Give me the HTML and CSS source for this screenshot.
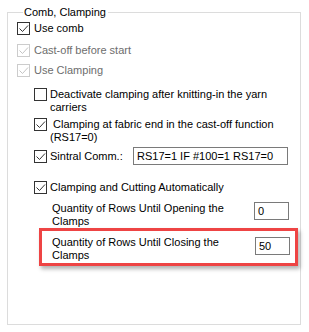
FILE: index.html
```html
<!DOCTYPE html>
<html>
<head>
  <meta charset="utf-8" />
  <title>Comb, Clamping</title>
  <link rel="stylesheet" href="styles.css">
</head>
<body>
  <fieldset class="group">
    <legend>Comb, Clamping</legend>

    <label class="check">
      <span class="box"><svg viewBox="0 0 11 11"><path d="M1.5 5.5 L4.5 8.5 L10 2.5" /></svg></span>
      <span>Use comb</span>
    </label>
    <label class="check off row2">
      <span class="box"><svg viewBox="0 0 11 11"><path d="M1.5 5.5 L4.5 8.5 L10 2.5" /></svg></span>
      <span>Cast-off before start</span>
    </label>
    <label class="check off row3">
      <span class="box"><svg viewBox="0 0 11 11"><path d="M1.5 5.5 L4.5 8.5 L10 2.5" /></svg></span>
      <span>Use Clamping</span>
    </label>

    <div class="sub">
      <label class="check top">
        <span class="box"></span>
        <span>Deactivate clamping after knitting-in the yarn<br />carriers</span>
      </label>
      <label class="check top fabric">
        <span class="box"><svg viewBox="0 0 11 11"><path d="M1.5 5.5 L4.5 8.5 L10 2.5" /></svg></span>
        <span>&nbsp;Clamping at fabric end in the cast-off function<br />(RS17=0)</span>
      </label>
      <div class="sintral">
        <label class="check">
          <span class="box"><svg viewBox="0 0 11 11"><path d="M1.5 5.5 L4.5 8.5 L10 2.5" /></svg></span>
          <span>Sintral Comm.:</span>
        </label>
        <div class="field wide">RS17=1 IF #100=1 RS17=0</div>
      </div>
      <label class="check cutting">
        <span class="box"><svg viewBox="0 0 11 11"><path d="M1.5 5.5 L4.5 8.5 L10 2.5" /></svg></span>
        <span>Clamping and Cutting Automatically</span>
      </label>

      <div class="qty">
        <span>Quantity of Rows Until Opening the<br />Clamps</span>
        <div class="field">0</div>
      </div>
      <div class="qty mark">
        <span>Quantity of Rows Until Closing the<br />Clamps</span>
        <div class="field">50</div>
      </div>
    </div>
  </fieldset>
</body>
</html>
```

FILE: styles.css
```css
body {
  margin: 0;
  background: #ffffff;
  font-family: "Liberation Sans", Arial, sans-serif;
  font-size: 11px;
  line-height: 13px;
  color: #000000;
}
.group {
  margin: 6px 0 0 7px;
  width: 294px;
  height: 319px;
  box-sizing: border-box;
  border: 1px solid #dcdcdc;
  padding: 3px 2px 0 9px;
}
.group legend {
  margin-left: 6px;
  padding: 0 2px 0 1px;
}
.check {
  display: flex;
  align-items: center;
  gap: 4px;
  height: 13px;
}
.check.top {
  align-items: flex-start;
  height: auto;
  gap: 3px;
}
.row2 {
  margin-top: 9px;
}
.row3 {
  margin-top: 7px;
}
.box {
  width: 13px;
  height: 13px;
  box-sizing: border-box;
  border: 1px solid #333333;
  background: #ffffff;
  flex: none;
}
.box svg {
  display: block;
  width: 11px;
  height: 11px;
}
.box path {
  fill: none;
  stroke: #333333;
  stroke-width: 1;
}
.off {
  color: #6d6d6d;
}
.off .box {
  border-color: #cccccc;
}
.off .box path {
  stroke: #c4c4c4;
}
.sub {
  margin-left: 17px;
  display: flex;
  flex-direction: column;
}
.sub .check.top:first-child {
  margin-top: 11px;
}
.fabric {
  margin-top: 4px;
}
.sintral {
  display: flex;
  align-items: center;
  margin-top: 3px;
  height: 18px;
}
.sintral .check {
  width: 99px;
  gap: 3px;
}
.field {
  height: 18px;
  box-sizing: border-box;
  border: 1px solid #7a7a7a;
  padding: 1px 3px;
  line-height: 15px;
  width: 35px;
  background: #ffffff;
}
.field.wide {
  width: 155px;
}
.cutting {
  margin-top: 16px;
  gap: 3px;
}
.qty {
  display: flex;
  justify-content: space-between;
  align-items: flex-start;
  margin: 8px 9px 0 18px;
}
.qty.mark {
  margin: 0 0 0 5px;
  border: 3px solid #ee4444;
  padding: 5px 5px 1px 10px;
  box-shadow: 2px 3px 4px rgba(0, 0, 0, 0.3);
}
.qty.mark .field {
  margin-top: 1px;
}
```
